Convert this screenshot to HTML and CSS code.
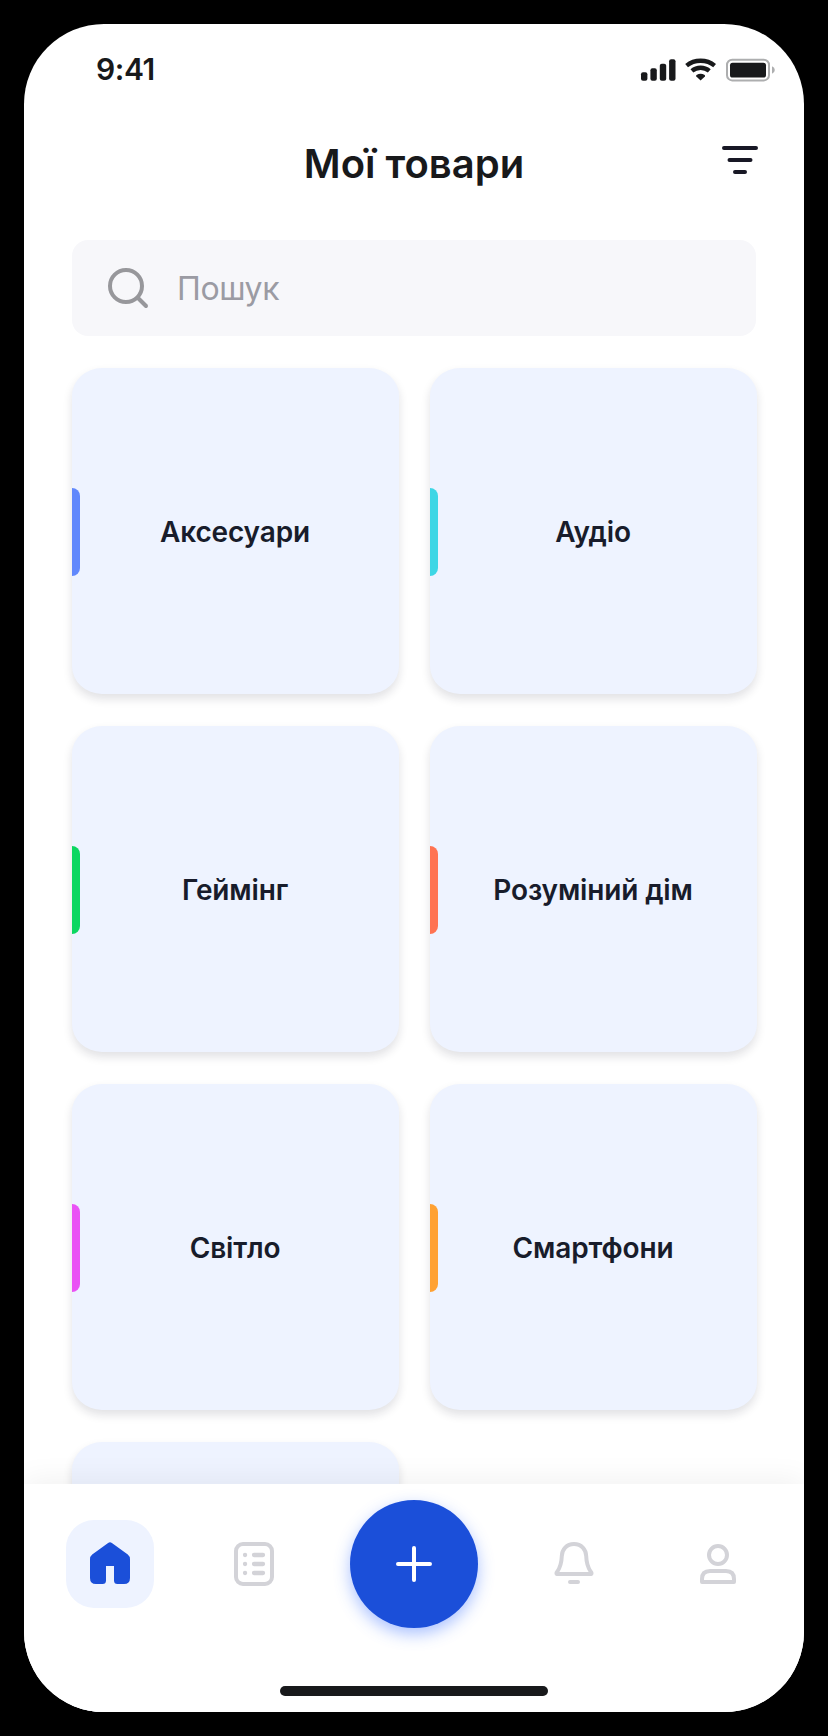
FILE: index.html
```html
<!DOCTYPE html>
<html lang="uk">
<head>
<meta charset="utf-8">
<title>Мої товари</title>
<link rel="stylesheet" href="styles.css">
</head>
<body>
<div class="phone">
  <div class="status">
    <span class="time">9:41</span>
    <svg class="status-icons" width="136" height="24" viewBox="0 0.3 136 24">
      <g fill="#18191b">
        <rect x="1" y="14.5" width="6.4" height="8.5" rx="2"/>
        <rect x="10.4" y="10.5" width="6.4" height="12.5" rx="2"/>
        <rect x="19.8" y="6" width="6.4" height="17" rx="2"/>
        <rect x="29.1" y="1.5" width="6.4" height="21.5" rx="2"/>
        <path d="M60.6 22.9 56.3 18.7Q55.8 18 56.5 17.4Q60.6 14.6 64.7 17.4Q65.4 18 64.9 18.7Z"/>
      </g>
      <path d="M46.6 7.9Q52.5 3.1 60.6 3.1T74.6 7.9M51.9 13.2Q55.7 10 60.6 10T69.3 13.2" fill="none" stroke="#18191b" stroke-width="4.4"/>
      <rect x="87" y="2.1" width="42" height="20.6" rx="5.2" fill="none" stroke="#adaeaf" stroke-width="2"/>
      <rect x="90" y="5" width="36" height="14.8" rx="2.6" fill="#18191b"/>
      <path d="M132 8.5Q134.8 9.7 134.8 12.3T132 16.1Z" fill="#adaeaf"/>
    </svg>
  </div>
  <header class="header">
    <h1 class="title">Мої товари</h1>
    <svg class="filter" width="48" height="48" viewBox="0 0 48 48" stroke="#181825" stroke-width="4" stroke-linecap="round">
      <path d="M8 12H40M13.5 24H34.5M19 36H29"/>
    </svg>
  </header>
  <div class="search">
    <svg width="48" height="48" viewBox="0 0 48 48" fill="none" stroke="#97979b" stroke-width="4" stroke-linecap="round">
      <circle cx="22" cy="22" r="16"/><path d="M34 34 42 42"/>
    </svg>
    <span>Пошук</span>
  </div>
  <main class="grid">
    <div class="card blue">Аксесуари</div>
    <div class="card cyan">Аудіо</div>
    <div class="card green">Геймінг</div>
    <div class="card coral">Розуміний дім</div>
    <div class="card pink">Світло</div>
    <div class="card orange">Смартфони</div>
    <div class="card"></div>
  </main>
  <nav class="nav">
    <div class="tabs">
      <a class="tab active">
        <svg width="48" height="48" viewBox="0 0 48 48" fill="#1b4fd9"><path d="M22.1 2.9Q24 1.5 25.9 2.9L41.8 14.6Q44 16.4 44 19.2V38Q44 44 38 44H31.5Q28 44 28 40.5V26H20V40.5Q20 44 16.5 44H10Q4 44 4 38V19.2Q4 16.4 6.2 14.6Z"/></svg>
      </a>
      <a class="tab">
        <svg width="48" height="48" viewBox="0 0 48 48" fill="none" stroke="#d3d3d8" stroke-width="4" stroke-linecap="round">
          <rect x="6" y="4" width="36" height="40" rx="7"/>
          <path d="M24 15H33M24 24H33M24 33H33M15 15H15.1M15 24H15.1M15 33H15.1" stroke-width="4.3"/>
        </svg>
      </a>
      <a class="fab">
        <svg width="48" height="48" viewBox="0 0 48 48" stroke="#fff" stroke-width="4" stroke-linecap="round"><path d="M24 8V40M8 24H40"/></svg>
      </a>
      <a class="tab">
        <svg width="48" height="48" viewBox="0 0 48 48" fill="none" stroke="#d3d3d8" stroke-width="4" stroke-linecap="round" stroke-linejoin="round">
          <path d="M24 4C31.5 4 36 9.5 36.2 16C36.5 25 38.5 28.5 40.8 31.8Q41.9 33.3 41.3 34H6.7Q6.1 33.3 7.2 31.8C9.5 28.5 11.5 25 11.8 16C12 9.5 16.5 4 24 4ZM20 42H28"/>
        </svg>
      </a>
      <a class="tab">
        <svg width="48" height="48" viewBox="0 0 48 48" fill="none" stroke="#d3d3d8" stroke-width="4" stroke-linejoin="round">
          <circle cx="24" cy="15" r="9"/>
          <path d="M8 42V39Q8 31 16 31H32Q40 31 40 39V42Z"/>
        </svg>
      </a>
    </div>
    <div class="home-indicator"></div>
  </nav>
</div>
</body>
</html>
```

FILE: styles.css
```css
* { box-sizing: border-box; }
body {
  margin: 0;
  padding: 24px;
  height: 1736px;
  background: #000;
  font-family: Inter, "Noto Sans", sans-serif;
  color: #18191b;
  overflow: hidden;
}
.phone {
  height: 1688px;
  border-radius: 80px;
  background: #fff;
  overflow: hidden;
  display: flex;
  flex-direction: column;
}
.status {
  height: 88px;
  padding: 34px 28px 0 72px;
  display: flex;
  justify-content: space-between;
  flex: none;
}
.time {
  font-size: 30px;
  line-height: 22px;
  font-weight: 600;
  letter-spacing: -0.4px;
}
.status-icons { flex: none; }
.header {
  height: 128px;
  flex: none;
  padding: 0 40px 0 88px;
  display: flex;
  align-items: flex-start;
}
.title {
  flex: 1;
  margin: 28px 0 0;
  font-size: 40px;
  line-height: 48px;
  font-weight: 600;
  text-align: center;
  white-space: nowrap;
}
.filter { margin-top: 24px; flex: none; }
.search {
  height: 96px;
  flex: none;
  margin: 0 48px;
  padding: 0 32px;
  border-radius: 16px;
  background: #f7f7fa;
  color: #9b9ba3;
  display: flex;
  align-items: center;
  gap: 25px;
  font-size: 32px;
  letter-spacing: -0.4px;
}
.grid {
  flex: 1;
  min-height: 0;
  padding: 32px 47.5px 0;
  display: grid;
  grid-template-columns: 327px 327px;
  grid-auto-rows: 326px;
  column-gap: 31px;
  row-gap: 32px;
}
.card {
  display: flex;
  align-items: center;
  justify-content: center;
  position: relative;
  padding-top: 2px;
  border-radius: 30px / 28px;
  background: #eef3ff;
  box-shadow: 0 5px 10px rgba(24, 25, 50, 0.13);
  color: #181c2b;
  font-size: 28px;
  font-weight: 600;
  letter-spacing: -0.15px;
}
.card::before {
  position: absolute;
  top: 120px;
  left: 0.5px;
  width: 8px;
  height: 88px;
  border-radius: 0 8px 8px 0;
  background: var(--accent, transparent);
  content: "";
}
.blue { --accent: #6188fc; }
.cyan { --accent: #3dd6e5; }
.green { --accent: #0cd760; }
.coral { --accent: #ff7352; }
.pink { --accent: #ea52f5; }
.orange { --accent: #ffa133; }
.nav {
  position: relative;
  height: 228px;
  flex: none;
  background: #fff;
  box-shadow: 0 -4px 28px rgba(0, 0, 0, 0.06);
  display: flex;
  flex-direction: column;
  align-items: center;
}
.tabs {
  height: 160px;
  display: flex;
  align-items: center;
  gap: 56px;
}
.tab {
  width: 88px;
  height: 88px;
  display: flex;
  align-items: center;
  justify-content: center;
}
.active {
  border-radius: 28px;
  background: #eef3ff;
}
.fab {
  width: 128px;
  height: 128px;
  margin: 0 -4px;
  border-radius: 50%;
  background: #1b4fd9;
  box-shadow: 0 6px 16px rgba(55, 110, 255, 0.42);
  display: flex;
  align-items: center;
  justify-content: center;
}
.home-indicator {
  width: 268px;
  height: 10px;
  margin-top: 42px;
  border-radius: 5px;
  background: #18191b;
}
```
